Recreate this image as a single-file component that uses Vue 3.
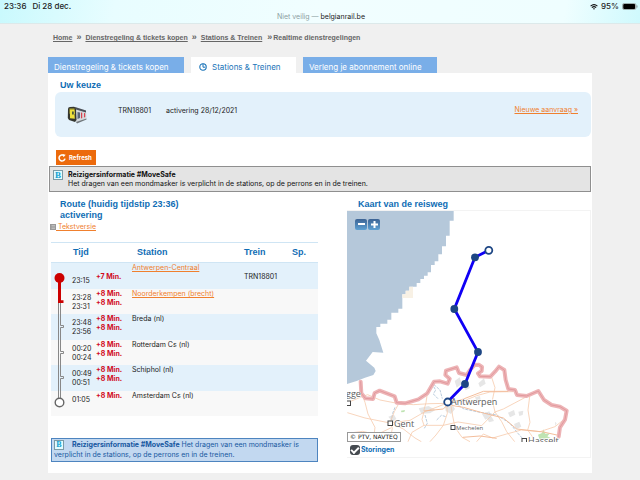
<script setup>
const crumbs = ['Home', 'Dienstregeling & tickets kopen', 'Stations & Treinen']

const stops = [
  { times: ['', '23:15'], delays: ['', '+7 Min.'], station: 'Antwerpen-Centraal', link: true, train: 'TRN18801', kind: 'start' },
  { times: ['23:28', '23:31'], delays: ['+8 Min.', '+8 Min.'], station: 'Noorderkempen (brecht)', link: true, train: '', kind: 'current' },
  { times: ['23:48', '23:56'], delays: ['+8 Min.', '+8 Min.'], station: 'Breda (nl)', link: false, train: '', kind: 'stop' },
  { times: ['00:20', '00:24'], delays: ['+8 Min.', '+8 Min.'], station: 'Rotterdam Cs (nl)', link: false, train: '', kind: 'stop' },
  { times: ['00:49', '00:51'], delays: ['+8 Min.', '+8 Min.'], station: 'Schiphol (nl)', link: false, train: '', kind: 'stop' },
  { times: ['01:05', ''], delays: ['+8 Min.', ''], station: 'Amsterdam Cs (nl)', link: false, train: '', kind: 'end' },
]
</script>

<template>
  <div class="screen">
    <header class="status">
      <div class="status-row">
        <div class="clock"><span>23:36</span><span>Di 28 dec.</span></div>
        <div class="power">
          <svg width="8" height="6" viewBox="0 0 8 6">
            <path d="M.6 2.2Q4-.9 7.4 2.2M1.9 3.6Q4 1.7 6.1 3.6" fill="none" stroke="#111" stroke-width="1.1" />
            <path d="M4 5.8 2.9 4.6Q4 3.8 5.1 4.6Z" fill="#111" />
          </svg>
          <span>95%</span>
          <svg width="16" height="7" viewBox="0 0 16 7">
            <rect x=".5" y=".5" width="13.500" height="6" rx="1.600" fill="#fff" stroke="#899" stroke-width=".8" />
            <rect x="1.200" y="1.100" width="12" height="4.800" rx="1" fill="#000" />
            <path d="M15 2.500v2" stroke="#899" />
          </svg>
        </div>
      </div>
      <div class="url"><span>Niet veilig — </span>belgianrail.be</div>
    </header>

    <div class="page">
      <nav class="crumbs">
        <template v-for="c in crumbs" :key="c">
          <a href="#">{{ c }}</a><i>»</i>
        </template>
        <span>Realtime dienstregelingen</span>
      </nav>

      <nav class="tabs">
        <a href="#" class="tab first">Dienstregeling &amp; tickets kopen</a>
        <a href="#" class="tab active">
          <svg width="8" height="8" viewBox="0 0 8 8">
            <circle cx="4" cy="4" r="3.200" fill="none" stroke="#1873b8" stroke-width="1.100" />
            <path d="M4 .8V4.200H6.200" fill="none" stroke="#1873b8" />
          </svg>
          Stations &amp; Treinen
        </a>
        <a href="#" class="tab last">Verleng je abonnement online</a>
      </nav>

      <main class="sheet">
        <h2 class="choice-title">Uw keuze</h2>
        <section class="choice">
          <svg class="train" width="21" height="19" viewBox="0 0 21 19">
            <path d="M8 2 19 5.500 19.500 13.500 10 18 8 16Z" fill="#d4d9dc" />
            <path d="M8 2 19 5.500V7.500L9 4.500Z" fill="#4a5058" />
            <path d="M10.500 7 13 7.500V13L10.500 14Z" fill="#596477" />
            <path d="M14 7.500 15.200 7.800V13L14 13.600Z" fill="#d8434f" />
            <path d="M17 8 18.200 8.200V12L17 12.600Z" fill="#d8434f" />
            <path d="M9 17 19.500 13.400V14.600L10 18.500Z" fill="#70777b" />
            <path d="M1 4Q1 2 3 2L7 1.800Q9 2 9 4L9.500 15 8 17 2 15 .8 13Z" fill="#34362f" />
            <path d="M2.500 3.600 7.500 3.500 8 9 2.500 8.700Z" fill="#b7ae31" />
            <path d="M3 5 7.300 5 7.800 13.800 3 13.200Z" fill="#eee03c" />
            <path d="M5 6.500H6.800V9.500H5Z" fill="#4d5b3a" />
          </svg>
          <span class="number">TRN18801</span>
          <span class="date">activering 28/12/2021</span>
          <a href="#" class="new">Nieuwe aanvraag »</a>
        </section>

        <button class="refresh" type="button">
          <svg width="8" height="8" viewBox="0 0 8 8">
            <path d="M5.900 1.500A3 3 0 1 0 7 4.600" fill="none" stroke="#fff" stroke-width="1.500" />
            <path d="M4.400.1 7.700.8 5.500 3.200Z" fill="#fff" />
          </svg>
          Refresh
        </button>

        <section class="notice">
          <span class="logo">B</span>
          <div>
            <strong>Reizigersinformatie #MoveSafe</strong>
            <p>Het dragen van een mondmasker is verplicht in de stations, op de perrons en in de treinen.</p>
          </div>
        </section>

        <div class="columns">
          <section class="route">
            <h2>Route (huidig tijdstip 23:36)<br />activering</h2>
            <a href="#" class="textlink">
              <svg width="6" height="6" viewBox="0 0 6 6">
                <rect width="6" height="6" fill="#999" />
                <path d="M1.500 1.500H5M1.500 3H5M1.500 4.500H5" stroke="#ccc" stroke-width=".7" />
              </svg><span>&nbsp;Tekstversie</span>
            </a>

            <table>
              <colgroup>
                <col class="c-line" /><col class="c-time" /><col class="c-delay" /><col class="c-station" /><col class="c-train" /><col class="c-track" />
              </colgroup>
              <thead>
                <tr><th colspan="3" class="h-time">Tijd</th><th class="h-station">Station</th><th>Trein</th><th>Sp.</th></tr>
              </thead>
              <tbody>
                <tr v-for="(s, i) in stops" :key="s.station">
                  <td class="line">
                    <svg width="20" :height="i % 2 ? 25 : 26">
                      <template v-if="s.kind === 'start'">
                        <path d="M8.500 15V26" stroke="#c00" stroke-width="3" />
                        <circle cx="8.500" cy="15" r="5" fill="#c00" />
                      </template>
                      <template v-else-if="s.kind === 'current'">
                        <path d="M7.500 12V26M9.500 12V26" stroke="#888" />
                        <path d="M8.500 0V12.500H12.500" fill="none" stroke="#c00" stroke-width="3" />
                        <path d="M10 10.500H13" stroke="#fafafa" stroke-width="1.500" />
                      </template>
                      <template v-else-if="s.kind === 'stop'">
                        <path d="M7.500 0V26M9.500 0V11.500H12.500V13.500H9.500V26" fill="none" stroke="#888" />
                      </template>
                      <template v-else>
                        <path d="M7.500 0V9M9.500 0V9" stroke="#888" />
                        <circle cx="8.500" cy="11.500" r="4.300" fill="#fff" stroke="#666" stroke-width="1.400" />
                      </template>
                    </svg>
                  </td>
                  <td class="time"><div v-for="(t, n) in s.times" :key="n">{{ t }}</div></td>
                  <td class="delay"><div v-for="(d, n) in s.delays" :key="n">{{ d }}</div></td>
                  <td class="station"><a v-if="s.link" href="#">{{ s.station }}</a><template v-else>{{ s.station }}</template></td>
                  <td class="train-no">{{ s.train }}</td>
                  <td></td>
                </tr>
              </tbody>
            </table>

            <div class="note">
              <span class="logo">B</span><strong>Reizigersinformatie #MoveSafe</strong> Het dragen van een mondmasker is verplicht in de stations, op de perrons en in de treinen.
            </div>
          </section>

          <section class="trip">
            <h2>Kaart van de reisweg</h2>
            <div class="map-panel">
              <div class="map">
                <svg class="chart" viewBox="347 211 243 231" font-family="Open Sans, sans-serif">
                  <g transform="translate(340 205) scale(.33333)">
                    <path fill="#b5c8da" d="M21 18H341V47H329V92H318V124H306V148H295V169H284V180H273V202H263V212H252V222H241V234H230V245H208V257H197V268H187V311H175V323H154V344H142V356H121V366H109V385L118 405 130 443 98 441 78 467 103 488 107 498 100 510 75 518 50 528 21 537Z" />
                    <path fill="#f8f1e5" d="M208 245H219V279H187V268H197V257H208Z" />
                  </g>
                  <g transform="translate(340 340) scale(.33333)">
                    <g fill="#e6e6e6">
                      <path d="M315 198 335 190 345 207 333 222 317 213ZM415 130 432 115 437 131 420 142ZM426 222 448 214 454 228 436 239ZM504 218 522 210 526 224 510 232ZM535 215 550 212 548 225 538 228ZM522 252 538 245 544 260 528 268ZM344 123 359 112 365 132 350 143ZM145 230 162 224 169 236 158 247ZM645 245 650 250 646 259Z" />
                      <path d="M236 205 266 198 286 210 270 220 244 221ZM370 137 384 132 390 144 377 151ZM440 232 455 230 462 243 447 247ZM405 172 420 168 422 181 410 184Z" />
                    </g>
                    <path fill="#bfe3b2" d="M594 284 606 279 610 268 616 281 630 280 622 289 632 294 598 296ZM183 212 195 210 193 216 184 217Z" />
                    <path fill="none" stroke="#b9cbdc" stroke-width="3" stroke-dasharray="9 3" d="M275 130 287 150 280 162 296 178M281 133 300 150 307 176M165 202 158 220 154 240M255 225 262 250 253 265M290 240 304 226 318 230M345 190 372 207 420 217 470 225 510 250 532 278 550 298" />
                    <g fill="none" stroke="#f7cdb0" stroke-width="2.500" stroke-linejoin="round">
                      <path d="M22 218 75 234 150 249 210 241 255 215 320 190 335 173 355 150 375 130" />
                      <path d="M22 188 61 172 83 164 120 180 172 190 220 194 270 191 322 190 368 184 410 167 450 156 520 155" />
                      <path d="M65 160 75 187 84 222 105 262 100 305M150 305 157 264 150 248 163 215 174 195" />
                      <path d="M320 190 322 220 310 256 288 285 270 305M332 190 338 228 345 262 366 292 390 305" />
                      <path d="M204 305 216 277 252 256 310 256 354 246 425 257 465 216 490 207 560 170" />
                      <path d="M152 249 190 267 225 294 244 305M22 280 68 274 110 284 154 263" />
                      <path d="M410 305 430 282 458 294 500 282 544 270 600 275 645 260 675 236M455 112 465 143 457 181 465 216 485 245 500 275 524 305" />
                      <path d="M569 170 564 210 570 247 563 270 580 294M252 215 246 238 252 256M262 160 258 188 251 213" />
                    </g>
                    <path fill="none" stroke="#f3bd9b" stroke-width="3" d="M328 195 370 202 426 218 490 234 530 267 610 276 655 286M325 188 365 179 430 154 505 154M252 213 310 207 326 191M368 292 420 288 470 295" />
                    <g fill="none" stroke-linejoin="round" stroke-linecap="round">
                      <path stroke="#edb4b6" stroke-width="12" d="M62 125 64 160 76 175 99 177 104 159 119 152 164 169 170 188 195 190 235 178 262 160 282 125 300 124 323 131 329 116 316 105 318 92 350 82 357 99 380 105 390 90 404 75 416 74 426 81 425 93 414 100 420 109 451 110 465 95 477 80 493 90 497 120 505 147 525 150 531 165 560 168 595 153 612 180 635 195 660 200 680 212 675 239 660 262 656 290" />
                      <path stroke="#e29a9e" stroke-width="3" d="M62 125 64 160 76 175 99 177 104 159 119 152 164 169 170 188 195 190 235 178 262 160 282 125 300 124 323 131 329 116 316 105 318 92 350 82 357 99 380 105 390 90 404 75 416 74 426 81 425 93 414 100 420 109 451 110 465 95 477 80 493 90 497 120 505 147 525 150 531 165 560 168 595 153 612 180 635 195 660 200 680 212 675 239 660 262 656 290" />
                    </g>
                  </g>
                  <g fill="#fff" stroke="#444" stroke-width="1">
                    <rect x="345.500" y="401" width="5" height="4.500" />
                    <rect x="388" y="421" width="4.500" height="4.500" />
                    <rect x="451" y="425.500" width="4" height="4" />
                    <rect x="522" y="438.500" width="4.500" height="4.500" />
                  </g>
                  <g fill="#5c5c5c" stroke="#fff" stroke-width="1" paint-order="stroke" font-size="9">
                    <text x="346" y="397">gge</text>
                    <text x="394" y="427">Gent</text>
                    <text x="451" y="405">Antwerpen</text>
                    <text x="456" y="430" font-size="6">Mechelen</text>
                    <text x="528" y="444">Hasselt</text>
                  </g>
                  <path d="M488.800 250.300 475 257.300 454.300 309 478 352 465 384 447.500 402" fill="none" stroke="#1000f5" stroke-width="2.800" />
                  <g fill="#1d4684">
                    <circle cx="475" cy="257.300" r="3.900" />
                    <circle cx="454.300" cy="309" r="3.900" />
                    <circle cx="478" cy="352" r="3.900" />
                    <circle cx="465" cy="384" r="3.900" />
                  </g>
                  <g fill="#fff" stroke="#1d4684" stroke-width="1.800">
                    <circle cx="488.800" cy="250.300" r="3.500" />
                    <circle cx="447.700" cy="402" r="3.500" />
                  </g>
                </svg>
                <div class="zoom">
                  <button type="button" aria-label="-"><svg width="11" height="11"><path d="M2 5H9" stroke="#fff" stroke-width="2" /></svg></button>
                  <button type="button" aria-label="+"><svg width="11" height="11"><path d="M2 5.500H9M5.500 2V9" stroke="#fff" stroke-width="2" /></svg></button>
                </div>
                <span class="copyright">© PTV, NAVTEQ</span>
              </div>
              <label class="faults"><input type="checkbox" checked />Storingen</label>
            </div>
          </section>
        </div>
      </main>
    </div>
  </div>
</template>

<style>
body {
  margin: 0;
  background: #f0f0f0;
}
</style>

<style scoped>
.screen {
  font: 7px/9px Inter, "Liberation Sans", sans-serif;
  color: #222;
}
* {
  box-sizing: border-box;
}
h2, p {
  margin: 0;
}
h2 {
  font: bold 9px/11px "Liberation Sans", sans-serif;
  color: #0f6db5;
}
.status {
  height: 24px;
  padding: 2px 2px 0 4px;
  background: linear-gradient(100deg, #c9f9fd, #e8fdff 18%, #f1feff 50%, #effeff 88%, #cff9fd);
  border-bottom: 1px solid #dce9ea;
}
.status-row {
  display: flex;
  justify-content: space-between;
  font-size: 8px;
}
.clock, .power {
  display: flex;
  align-items: center;
  font-weight: 500;
}
.clock {
  gap: 6px;
}
.power {
  gap: 3px;
}
.url {
  text-align: center;
  line-height: 11px;
}
.url span {
  color: #8da0a2;
}
.page {
  padding: 0 48px;
}
.crumbs {
  display: flex;
  padding: 9px 5px 15px;
  font: bold 7px/9px "Liberation Sans", sans-serif;
  color: #666;
}
.crumbs a {
  color: #666;
}
.crumbs i {
  width: 13px;
  text-align: center;
  font-size: 9px;
  font-style: normal;
}
.crumbs i:last-of-type {
  width: 10px;
  text-align: right;
  margin-right: 1px;
}
.tabs {
  display: flex;
  gap: 7px;
}
.tab {
  display: flex;
  align-items: center;
  height: 16px;
  padding: 4px 6px 0;
  font-size: 8px;
  line-height: 12px;
  color: #fff;
  text-decoration: none;
  background: #79aee8;
}
.tab.first {
  width: 136px;
}
.tab.active {
  width: 105px;
  padding-left: 8px;
  gap: 5px;
  color: #1873b8;
  background: #fff;
}
.tab.last {
  width: 134px;
}
.sheet {
  padding: 7px 1px 11px;
  background: #fff;
}
.choice-title {
  padding-left: 11px;
}
.choice {
  display: flex;
  margin: 1px 0 0 6px;
  height: 45px;
  padding: 13px 13px 0 12px;
  border-radius: 6px;
  background: #e3f1fb;
}
.number {
  width: 48px;
  margin-left: 30px;
}
.number, .date {
  padding-top: 1px;
}
.new {
  margin-left: auto;
}
a {
  color: #f0802e;
}
.refresh {
  display: flex;
  align-items: center;
  gap: 3px;
  height: 15px;
  width: 40px;
  margin: 13px 0 1px 7px;
  padding: 0 2px;
  border: 0;
  font: bold 6px/8px Inter, sans-serif;
  color: #fff;
  background: #ec6a0c;
}
.notice {
  display: flex;
  gap: 5px;
  padding: 3px;
  border: 1px solid #8f8f8f;
  background: #e4e4e4;
  color: #111;
}
.notice p, .notice strong {
  display: block;
}
.logo {
  display: inline-block;
  width: 10px;
  height: 10px;
  border: 1px solid #7b9aa5;
  background: #e2fbff;
  color: #119fd0;
  font: bold 9px/8px "Liberation Serif", serif;
  text-align: center;
}
.columns {
  display: grid;
  grid-template-columns: 269fr 273fr;
}
.route h2, .trip h2 {
  padding: 7px 11px 0;
}
.route h2 {
  padding-bottom: 1px;
}
.trip h2 {
  padding-left: 40px;
}
.textlink {
  display: flex;
  align-items: center;
  padding-left: 1px;
  text-decoration: none;
}
.textlink span {
  text-decoration: underline;
}
table {
  width: calc(100% - 2px);
  margin: 11px 0 0 2px;
  border-spacing: 0;
  table-layout: fixed;
}
.c-line { width: 20px; }
.c-time { width: 21px; }
.c-delay { width: 36px; }
.c-station { width: 116px; }
.c-train { width: 48px; }
th {
  height: 21px;
  padding: 0;
  border: solid #cfe5f4;
  border-width: 1px 0;
  text-align: left;
  font: bold 9px/11px "Liberation Sans", sans-serif;
  color: #0f6db5;
}
.h-time { padding-left: 22px; }
.h-station { padding-left: 9px; }
td {
  padding: 0;
  height: 25px;
  vertical-align: top;
}
tbody tr:nth-child(odd) td {
  height: 26px;
  background: #e3f1fb;
}
tbody tr:nth-child(even) td {
  background: #f8f8f8;
}
.line svg {
  display: block;
}
td div {
  height: 9px;
}
.time {
  padding: 4px 0 0 1px;
}
.delay {
  padding: 0 0 0 4px;
  font-weight: 700;
  color: #d10a1c;
}
.station {
  padding: 0 0 0 4px;
}
td.train-no {
  vertical-align: middle;
}
.note {
  margin: 22px 0 0 2px;
  padding: 1px 2px;
  border: 1px solid #4d84bf;
  background: #c2d8f0;
  color: #1757a0;
  line-height: 10px;
}
.note .logo {
  margin-right: 8px;
  font-size: 8px;
  vertical-align: top;
}
.map-panel {
  margin-left: 29px;
  border: solid #f3f3f3;
  border-width: 1px 1px 1px 0;
}
.map {
  position: relative;
}
.chart {
  display: block;
  width: 100%;
}
.zoom {
  position: absolute;
  top: 8px;
  left: 8px;
  display: flex;
  gap: 1px;
}
.zoom button {
  width: 12px;
  height: 11px;
  padding: 0;
  border: 0;
  border-radius: 2px;
  background: linear-gradient(#3c6394, #5da0d2);
}
.zoom svg {
  display: block;
  margin: 0 auto;
}
.copyright {
  position: absolute;
  left: 0;
  bottom: 0;
  padding: 0 2px;
  border: 1px solid #999;
  background: #fff;
  font: 6px/8px "DejaVu Sans", sans-serif;
}
.faults {
  display: flex;
  align-items: center;
  height: 15px;
  padding-left: 3px;
  font-weight: 700;
  color: #0f6db5;
}
.faults input {
  appearance: none;
  width: 10px;
  height: 10px;
  margin: 0 1px 0 0;
  border-radius: 3px;
  background: #454a50;
  display: grid;
  place-items: center;
}
.faults input:checked::before {
  content: "";
  width: 6px;
  height: 3px;
  border: solid #fff;
  border-width: 0 0 2px 2px;
  transform: rotate(-45deg);
}
</style>
